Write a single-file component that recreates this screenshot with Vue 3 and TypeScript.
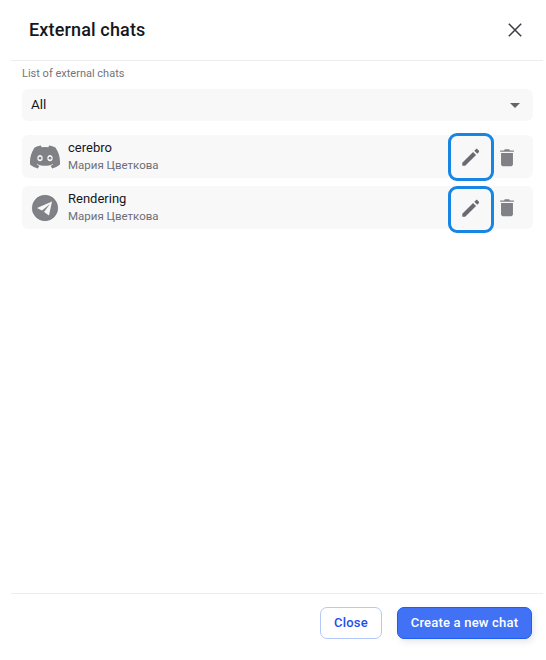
<script setup lang="ts">
interface Chat { name: string; owner: string; kind: 'discord' | 'telegram' }
const chats: Chat[] = [
  { name: 'cerebro', owner: 'Мария Цветкова', kind: 'discord' },
  { name: 'Rendering', owner: 'Мария Цветкова', kind: 'telegram' },
]
</script>

<template>
  <div class="dialog">
    <header class="head">
      <h1 class="title">External chats</h1>
      <svg class="close" viewBox="0 0 14 14" width="14" height="14" aria-hidden="true">
        <path d="M.8.8l12.4 12.4M13.2.8.8 13.2" stroke="#3a3d44" stroke-width="1.500" fill="none" />
      </svg>
    </header>
    <main class="body">
      <div class="label">List of external chats</div>
      <div class="select">
        <span>All</span>
        <span class="caret"></span>
      </div>
      <div class="list">
        <div v-for="c in chats" :key="c.name" class="row">
          <svg v-if="c.kind === 'discord'" class="logo" viewBox="0 0 24 24" width="30" height="30" aria-hidden="true">
            <path fill="#808186" d="M20.32 4.37a19.8 19.8 0 0 0-4.89-1.52.07.07 0 0 0-.08.04c-.21.38-.44.87-.61 1.25a18.3 18.3 0 0 0-5.49 0 12.6 12.6 0 0 0-.62-1.25.08.08 0 0 0-.08-.04 19.7 19.7 0 0 0-4.89 1.52.07.07 0 0 0-.03.03C.53 9.05-.32 13.58.1 18.06c0 .02.01.04.03.06a19.9 19.9 0 0 0 6 3.03.08.08 0 0 0 .08-.03c.46-.63.87-1.3 1.23-1.99a.08.08 0 0 0-.04-.11 13.1 13.1 0 0 1-1.87-.89.08.08 0 0 1-.01-.13l.37-.29a.07.07 0 0 1 .08-.01c3.93 1.79 8.18 1.79 12.06 0a.07.07 0 0 1 .08.01l.37.29a.08.08 0 0 1-.01.13c-.6.35-1.22.64-1.87.89a.08.08 0 0 0-.04.11c.36.7.77 1.36 1.23 1.99a.08.08 0 0 0 .08.03 19.8 19.8 0 0 0 6-3.03.08.08 0 0 0 .03-.06c.5-5.18-.84-9.67-3.55-13.66a.06.06 0 0 0-.03-.03zM8.02 15.33c-1.18 0-2.16-1.08-2.16-2.42s.96-2.42 2.16-2.42c1.21 0 2.18 1.1 2.16 2.42 0 1.34-.96 2.42-2.16 2.42zm7.97 0c-1.18 0-2.16-1.08-2.16-2.42s.96-2.42 2.16-2.42c1.21 0 2.18 1.1 2.16 2.42 0 1.34-.95 2.42-2.16 2.42z" />
            <circle cx="8" cy="12.900" r="1.100" fill="#808186" />
            <circle cx="16" cy="12.900" r="1.100" fill="#808186" />
          </svg>
          <svg v-else class="logo" viewBox="0 0 30 30" width="30" height="30" aria-hidden="true">
            <circle cx="15" cy="15" r="12.700" fill="#808186" stroke="#6a6c72" stroke-width=".6" />
            <path fill="#f7f7f8" d="M22 8.500 7 15l5 2.500 8-6.500-6 8 5 3.500z" />
          </svg>
          <div class="texts">
            <div class="name">{{ c.name }}</div>
            <div class="owner">{{ c.owner }}</div>
          </div>
          <button class="edit" type="button" aria-label="Edit">
            <svg viewBox="0 0 24 24" width="22" height="22" aria-hidden="true">
              <path fill="#696b71" d="M2.500 21.500v-3.200L14.300 6.500l3.200 3.200L5.700 21.500zM15.600 5.200l1.700-1.700c.5-.5 1.200-.5 1.700 0l1.500 1.500c.5.5.5 1.200 0 1.700l-1.700 1.700z" />
            </svg>
          </button>
          <svg class="trash" viewBox="0 0 24 24" width="22" height="22" aria-hidden="true">
            <path fill="#808186" d="M5.500 7.500h13V20c0 1.100-.9 2-2 2h-9c-1.100 0-2-.9-2-2zM4.500 4.800h4.300l.8-1.300h4.800l.8 1.300h4.300v1.400h-15z" />
          </svg>
        </div>
      </div>
    </main>
    <footer class="foot">
      <button class="btn ghost" type="button">Close</button>
      <button class="btn primary" type="button">Create a new chat</button>
    </footer>
  </div>
</template>

<style>
html, body { margin: 0; background: #fff; }
</style>

<style scoped>
.dialog {
  width: 546px;
  height: 660px;
  box-sizing: border-box;
  padding: 0 3px 0 11px;
  display: flex;
  flex-direction: column;
  background: #fff;
  font-family: Roboto, "Liberation Sans", sans-serif;
  color: #15171c;
}
.head {
  height: 61px;
  flex: none;
  box-sizing: border-box;
  border-bottom: 1px solid #eceded;
  display: flex;
  align-items: center;
  justify-content: space-between;
  padding: 0 21px 0 18px;
}
.title { margin: 0; font-size: 18px; line-height: 24px; font-weight: 500; letter-spacing: .15px; }
.body { flex: 1; padding: 0 10px 0 11px; }
.label { font-size: 11px; line-height: 13px; margin-top: 6px; color: #72747b; }
.select {
  margin-top: 9px;
  height: 32px;
  box-sizing: border-box;
  border-radius: 6px;
  background: #f8f8f9;
  display: flex;
  align-items: center;
  justify-content: space-between;
  padding: 0 13px 2px 9px;
  font-size: 13.500px;
}
.caret {
  width: 0;
  height: 0;
  margin-top: 2px;
  border-left: 5px solid transparent;
  border-right: 5px solid transparent;
  border-top: 5px solid #63656b;
}
.list { margin-top: 14px; display: flex; flex-direction: column; gap: 8px; }
.row {
  height: 43px;
  border-radius: 6px;
  background: #f8f8f9;
  display: flex;
  align-items: center;
  padding: 0 15px 0 8px;
}
.logo { flex: none; }
.texts { margin-left: 8px; flex: 1; }
.name { font-size: 13px; line-height: 16px; margin-top: -1px; }
.owner { font-size: 11.500px; line-height: 14px; margin-top: 2px; color: #6c6e76; }
.edit {
  flex: none;
  width: 46px;
  height: 48px;
  box-sizing: border-box;
  border: 3.500px solid #1685e3;
  border-radius: 9px;
  background: transparent;
  padding: 0;
  display: flex;
  align-items: center;
  justify-content: center;
}
.row + .row .edit { height: 47px; margin-top: 4px; padding-bottom: 4px; }
.trash { flex: none; margin-left: 2px; }
.row + .row .trash { margin-top: -1px; }
.foot {
  height: 67px;
  flex: none;
  box-sizing: border-box;
  border-top: 1px solid #eceded;
  display: flex;
  justify-content: flex-end;
  align-items: flex-start;
  gap: 15px;
  padding: 13px 11px 0 0;
}
.btn {
  height: 32px;
  border-radius: 7px;
  font-family: inherit;
  font-size: 13px;
  font-weight: 500;
  letter-spacing: .2px;
  padding: 0 0 2px;
}
.ghost { width: 62px; background: #fff; border: 1px solid #b4c8fb; color: #1f4fe8; }
.primary {
  width: 135px;
  background: #4172f5;
  border: 1px solid #1f5cf0;
  color: #fff;
  box-shadow: 2px 3px 6px rgba(60, 70, 110, .12);
}
</style>
